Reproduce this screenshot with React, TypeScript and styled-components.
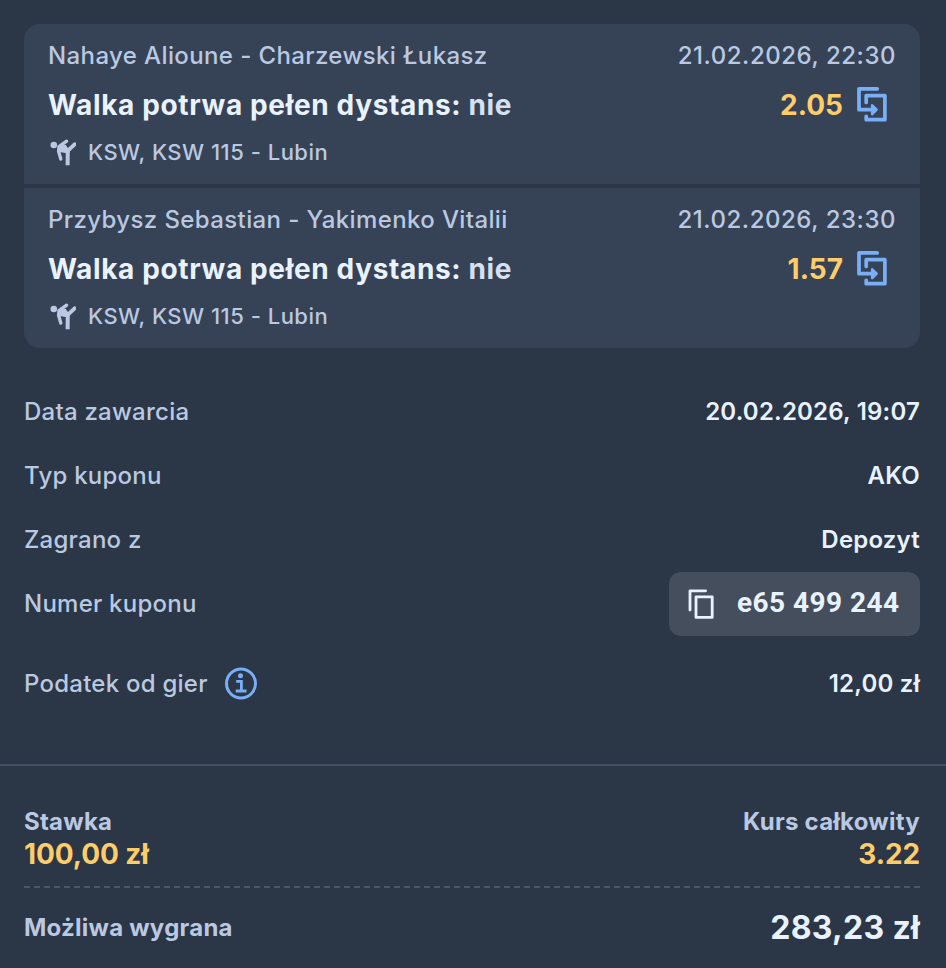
import React from "react";
import styled, { createGlobalStyle } from "styled-components";

const color = {
  page: "#2b3646",
  card: "#364256",
  button: "#454e5d",
  line: "#435063",
  dash: "#4b5768",
  muted: "#bac9e1",
  text: "#e9f2ff",
  pick: "#d6e0f1",
  gold: "#fdcd69",
  blue: "#79aff6",
};

const GlobalStyle = createGlobalStyle`
  *, *::before, *::after { box-sizing: border-box; }
  body {
    margin: 0;
    background: ${color.page};
    color: ${color.text};
    font-family: Inter, sans-serif;
    -webkit-font-smoothing: antialiased;
  }
  svg { display: block; flex: none; }
`;

const Page = styled.main`
  width: 946px;
  height: 968px;
  padding-top: 24px;
  overflow: hidden;
`;

const Events = styled.section`
  display: flex;
  flex-direction: column;
  gap: 4px;
  margin: 0 26px 0 24px;
  border-radius: 16px;
  overflow: hidden;
`;

const EventCard = styled.article`
  height: 160px;
  padding: 14px 24px 0;
  background: ${color.card};
`;

const Line = styled.div<{ $height: number }>`
  display: flex;
  align-items: center;
  justify-content: space-between;
  height: ${(p) => p.$height}px;
  white-space: nowrap;
`;

const Players = styled.span`
  color: ${color.muted};
  font-size: 24px;
  font-weight: 450;
  letter-spacing: 0.39px;
`;

const EventDate = styled.time`
  color: ${color.muted};
  font-size: 24px;
  font-weight: 550;
  letter-spacing: 0.53px;
`;

const Market = styled.h2`
  margin: 0;
  font-size: 28px;
  font-weight: 650;
  letter-spacing: 0.64px;
`;

const Pick = styled.span`
  color: ${color.pick};
  font-weight: 700;
`;

const Odds = styled.div`
  display: flex;
  align-items: center;
  gap: 13px;
  padding-right: 7px;
  color: ${color.gold};
  font-size: 28px;
  font-weight: 700;
  letter-spacing: 0;
`;

const League = styled.div`
  display: flex;
  align-items: center;
  gap: 12px;
  color: ${color.muted};
  font-size: 22px;
  font-weight: 450;
  letter-spacing: 0.5px;
`;

const Details = styled.dl`
  margin: 31px 26px 0 24px;
`;

const Detail = styled.div<{ $tall?: boolean }>`
  display: flex;
  align-items: center;
  justify-content: space-between;
  height: ${(p) => (p.$tall ? 96 : 64)}px;
`;

const Label = styled.dt`
  display: flex;
  align-items: center;
  gap: 17px;
  color: ${color.muted};
  font-size: 24px;
  font-weight: 450;
  letter-spacing: 0.24px;
`;

const Value = styled.dd`
  margin: 0;
  font-size: 24px;
  font-weight: 600;
  letter-spacing: 0.2px;
`;

const CopyButton = styled.button`
  display: flex;
  align-items: center;
  gap: 22px;
  width: 251px;
  height: 64px;
  margin: 2px 0 0;
  padding: 0 0 1px 18px;
  border: 0;
  border-radius: 12px;
  background: ${color.button};
  color: ${color.text};
  font: 700 28px Roboto, sans-serif;
  letter-spacing: 0.45px;
`;

const CouponNumber = styled.span`
  padding-bottom: 2px;
`;

const Summary = styled.footer`
  margin-top: 33px;
  padding: 40px 26px 0 24px;
  border-top: 2px solid ${color.line};
`;

const Totals = styled.div`
  display: flex;
  justify-content: space-between;
  height: 82px;
  border-bottom: 2px dashed ${color.dash};
`;

const Total = styled.div<{ $end?: boolean }>`
  display: flex;
  flex-direction: column;
  align-items: ${(p) => (p.$end ? "flex-end" : "flex-start")};
`;

const TotalLabel = styled.span`
  color: ${color.muted};
  font-size: 24px;
  font-weight: 700;
  line-height: 32px;
  letter-spacing: 0.24px;
`;

const TotalValue = styled.span`
  color: ${color.gold};
  font-size: 28px;
  font-weight: 700;
  line-height: 33px;
  letter-spacing: -0.1px;
`;

const Win = styled.div`
  display: flex;
  align-items: center;
  justify-content: space-between;
  height: 79px;
`;

const WinAmount = styled.strong`
  font-size: 32px;
  font-weight: 700;
  letter-spacing: 0.3px;
`;

const FighterIcon = () => (
  <svg width="28" height="28" viewBox="0 0 28 28" fill="none" stroke="currentColor" strokeWidth="3.4" strokeLinecap="round" strokeLinejoin="round">
    <circle cx="5.8" cy="7" r="3.3" fill="currentColor" stroke="none" />
    <path d="M18.6 3.2 11 8.6 10.6 13.4 12.8 21" />
    <path d="M26.8 6.2 20 12.6" strokeWidth="3.8" />
    <path d="M19.8 12 19.6 27.2" strokeWidth="4" strokeLinecap="butt" />
    <path d="M11.4 8.6 17.2 7.4 20.6 12.2 20.6 14.8 11.6 13.4Z" fill="currentColor" strokeWidth="1.4" />
  </svg>
);

const TransferIcon = () => (
  <svg width="33" height="38" viewBox="0 0.5 33 38" fill="none" stroke={color.blue} strokeWidth="3.7" strokeLinecap="round" strokeLinejoin="round">
    <path d="M21.2 3.4H3V24.2H17" />
    <path d="M10.2 17V10.2H28.9V34.2H10.2V30.8" />
    <path d="M16.2 19.8 20.6 24.2 16.2 28.6Z" fill={color.blue} strokeWidth="2.6" />
  </svg>
);

const CopyIcon = () => (
  <svg width="28" height="32" viewBox="0 0 28 32" fill="none" stroke="currentColor" strokeWidth="2.8" strokeLinecap="round" strokeLinejoin="round">
    <path d="M18.6 2.8H3V22" />
    <path d="M9 8.8H25.2V29.4H9Z" />
  </svg>
);

const InfoIcon = () => (
  <svg width="33" height="33" viewBox="0.5 0 33 33" fill="none" stroke={color.blue} strokeWidth="3">
    <circle cx="16.5" cy="16.5" r="14.5" />
    <circle cx="16" cy="8.8" r="2.5" fill={color.blue} stroke="none" />
    <path d="M11.7 14.3H16.9V24M11.2 24H22" strokeWidth="2.8" />
  </svg>
);

const events = [
  { players: "Nahaye Alioune - Charzewski Łukasz", date: "21.02.2026, 22:30", odds: "2.05" },
  { players: "Przybysz Sebastian - Yakimenko Vitalii", date: "21.02.2026, 23:30", odds: "1.57" },
];

export default function App() {
  return (
    <>
      <GlobalStyle />
      <Page>
        <Events>
          {events.map((event) => (
            <EventCard key={event.players}>
              <Line $height={34}>
                <Players>{event.players}</Players>
                <EventDate>{event.date}</EventDate>
              </Line>
              <Line $height={65}>
                <Market>
                  Walka potrwa pełen dystans: <Pick>nie</Pick>
                </Market>
                <Odds>
                  {event.odds}
                  <TransferIcon />
                </Odds>
              </Line>
              <Line $height={29}>
                <League>
                  <FighterIcon />
                  KSW, KSW 115 - Lubin
                </League>
              </Line>
            </EventCard>
          ))}
        </Events>

        <Details>
          <Detail>
            <Label>Data zawarcia</Label>
            <Value>20.02.2026, 19:07</Value>
          </Detail>
          <Detail>
            <Label>Typ kuponu</Label>
            <Value>AKO</Value>
          </Detail>
          <Detail>
            <Label>Zagrano z</Label>
            <Value>Depozyt</Value>
          </Detail>
          <Detail>
            <Label>Numer kuponu</Label>
            <Value>
              <CopyButton type="button">
                <CopyIcon />
                <CouponNumber>e65 499 244</CouponNumber>
              </CopyButton>
            </Value>
          </Detail>
          <Detail $tall>
            <Label>
              Podatek od gier
              <InfoIcon />
            </Label>
            <Value>12,00 zł</Value>
          </Detail>
        </Details>

        <Summary>
          <Totals>
            <Total>
              <TotalLabel>Stawka</TotalLabel>
              <TotalValue>100,00 zł</TotalValue>
            </Total>
            <Total $end>
              <TotalLabel>Kurs całkowity</TotalLabel>
              <TotalValue>3.22</TotalValue>
            </Total>
          </Totals>
          <Win>
            <TotalLabel>Możliwa wygrana</TotalLabel>
            <WinAmount>283,23 zł</WinAmount>
          </Win>
        </Summary>
      </Page>
    </>
  );
}
